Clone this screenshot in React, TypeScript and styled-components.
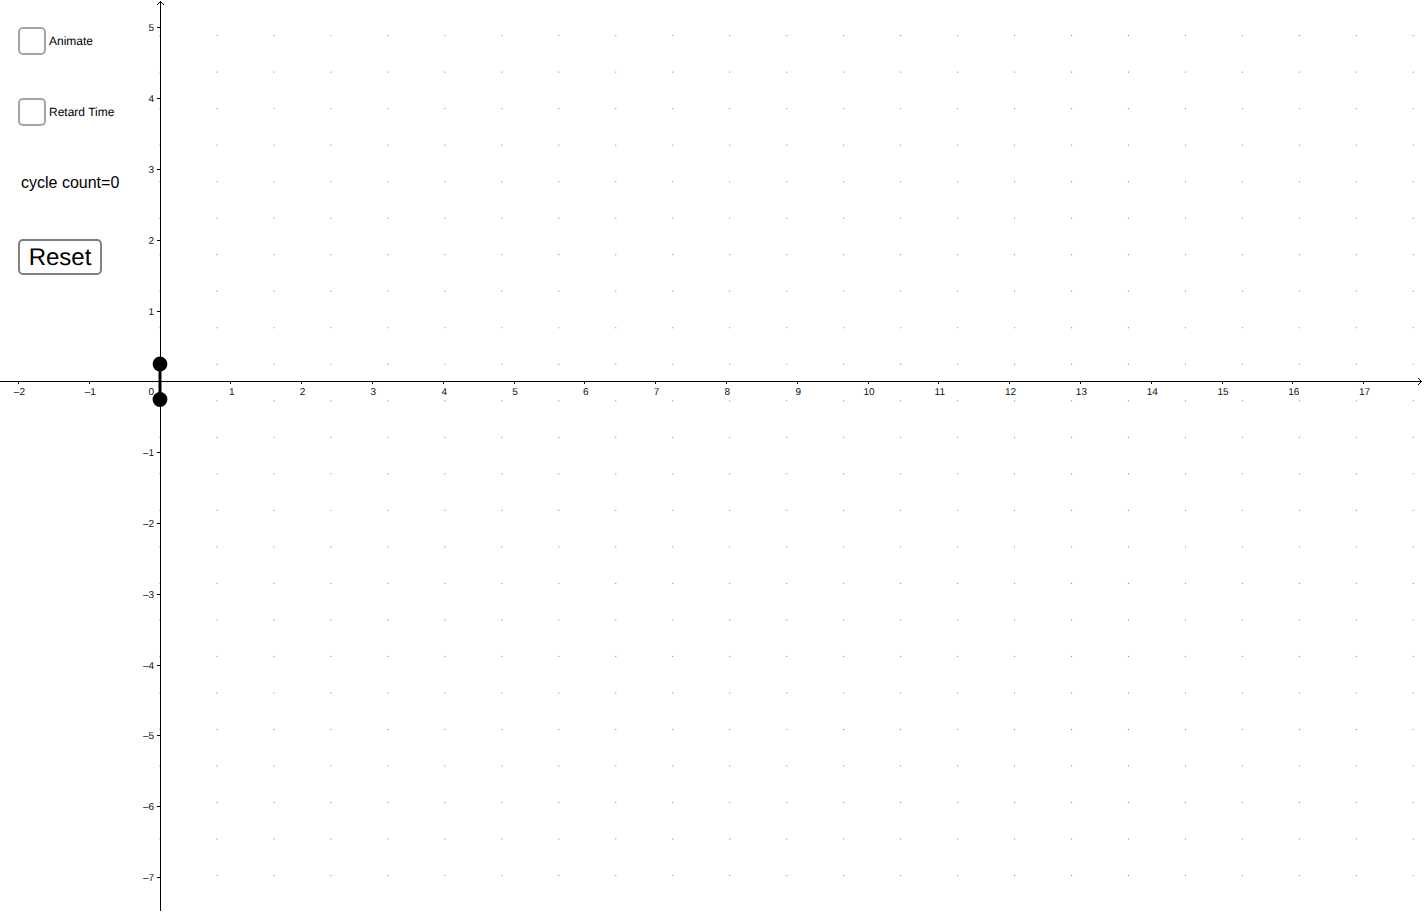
import React, { useEffect, useState } from "react";
import styled, { createGlobalStyle } from "styled-components";

const GlobalStyle = createGlobalStyle`
  body {
    margin: 0;
    background: #fff;
    color: #000;
    font-family: "Liberation Sans", Arial, sans-serif;
    text-rendering: geometricPrecision;
    overflow: hidden;
  }
`;

const Applet = styled.main`
  display: grid;
  min-height: 100vh;
`;

const Plot = styled.svg`
  grid-area: 1 / 1;
  display: block;
  width: 100%;
  height: 100vh;
  overflow: hidden;
`;

const TickLabel = styled.text`
  font-size: 10px;
  fill: #111;
`;

const Controls = styled.form`
  grid-area: 1 / 1;
  z-index: 1;
  display: flex;
  flex-direction: column;
  align-items: flex-start;
  align-self: start;
  justify-self: start;
  gap: 43px;
  padding: 27px 18px;
`;

const CheckRow = styled.label`
  display: flex;
  align-items: center;
  gap: 3px;
  height: 28px;
  font-size: 12px;
  line-height: 14px;
  white-space: nowrap;
`;

const CheckBox = styled.input`
  appearance: none;
  box-sizing: border-box;
  width: 28px;
  height: 28px;
  margin: 0;
  border: 2px solid #9fa9a0;
  border-radius: 5px;
  background: #fff;

  &:checked {
    background: #9fa9a0;
    box-shadow: inset 0 0 0 4px #fff;
  }
`;

const Readout = styled.output`
  height: 27px;
  padding-left: 3px;
  font-size: 16px;
  line-height: 28px;
  text-rendering: auto;
  white-space: nowrap;
`;

const ResetButton = styled.button`
  box-sizing: border-box;
  width: 84px;
  height: 36px;
  padding: 2px 0 0;
  border: 2px solid #808080;
  border-radius: 5px;
  background: #fff;
  color: #000;
  font-family: inherit;
  text-rendering: inherit;
  font-size: 24px;
  line-height: 28px;
`;

const ORIGIN = { x: 160, y: 381 };
const UNIT = 70.8;
const GRID = { x: 56.97, y: 36.52, top: 35.6, left: 159.8 };

function useWindowSize() {
  const read = () => ({ width: window.innerWidth, height: window.innerHeight });
  const [size, setSize] = useState(read);
  useEffect(() => {
    const update = () => setSize(read());
    window.addEventListener("resize", update);
    return () => window.removeEventListener("resize", update);
  }, []);
  return size;
}

const range = (from: number, to: number) =>
  Array.from({ length: Math.max(0, to - from + 1) }, (_, i) => from + i);

const format = (n: number) => (n < 0 ? `–${-n}` : `${n}`);

const tickX = (n: number) => Math.floor(ORIGIN.x + n * UNIT);
const tickY = (n: number) => Math.round(ORIGIN.y + 0.4 - n * UNIT);

function Graph() {
  const { width, height } = useWindowSize();
  const right = width - 2;
  const bottom = height - 2;
  const xs = range(-2, Math.floor((right - 20 - ORIGIN.x) / UNIT)).filter((n) => n !== 0);
  const ys = range(-Math.floor((bottom - 10 - ORIGIN.y) / UNIT), 5).filter((n) => n !== 0);
  const columns = range(0, Math.floor((right - GRID.left) / GRID.x));
  const rows = range(0, Math.floor((bottom - GRID.top) / GRID.y));

  return (
    <Plot role="img" aria-label="Coordinate plane with a vertical segment at the origin">
      <g fill="#748578">
        {columns.map((c) =>
          rows.map((r) => (
            <rect
              key={`${c}-${r}`}
              x={GRID.left + c * GRID.x - 0.3}
              y={GRID.top + r * GRID.y - 0.5}
              width="1"
              height="1"
            />
          ))
        )}
      </g>

      <g stroke="#000" strokeWidth="1" fill="none">
        <path d={`M0 ${ORIGIN.y + 0.5}H${right}`} />
        <path d={`M${right - 4} ${ORIGIN.y - 3}L${right - 0.5} ${ORIGIN.y + 0.5}L${right - 4} ${ORIGIN.y + 4}`} />
        <path d={`M${ORIGIN.x + 0.5} 1V${bottom}`} />
        <path d={`M${ORIGIN.x - 3} 5L${ORIGIN.x + 0.5} 1.5L${ORIGIN.x + 4} 5`} />
        {xs.map((n) => (
          <path key={`x${n}`} d={`M${tickX(n) + 0.5} ${ORIGIN.y}v3`} />
        ))}
        {ys.map((n) => (
          <path key={`y${n}`} d={`M${ORIGIN.x - 3} ${tickY(n) + 0.5}h3`} />
        ))}
      </g>

      {xs.map((n) => (
        <TickLabel key={n} x={ORIGIN.x + n * UNIT + 1} y={ORIGIN.y + 14} textAnchor="middle">
          {format(n)}
        </TickLabel>
      ))}
      <TickLabel x={ORIGIN.x - 6} y={ORIGIN.y + 14} textAnchor="end">
        0
      </TickLabel>
      {ys.map((n) => (
        <TickLabel key={n} x={ORIGIN.x - 6} y={tickY(n) + 4} textAnchor="end">
          {format(n)}
        </TickLabel>
      ))}

      <line x1={ORIGIN.x} x2={ORIGIN.x} y1="364" y2="399.5" stroke="#000" strokeWidth="3" />
      <circle cx={ORIGIN.x} cy="364" r="7.4" />
      <circle cx={ORIGIN.x} cy="399.5" r="7.4" />
    </Plot>
  );
}

export default function App() {
  const [cycles, setCycles] = useState(0);

  return (
    <>
      <GlobalStyle />
      <Applet>
        <Graph />
        <Controls onReset={() => setCycles(0)}>
          <CheckRow htmlFor="animate">
            <CheckBox id="animate" type="checkbox" />
            Animate
          </CheckRow>
          <CheckRow htmlFor="retard">
            <CheckBox id="retard" type="checkbox" />
            Retard Time
          </CheckRow>
          <Readout>cycle count={cycles}</Readout>
          <ResetButton type="reset">Reset</ResetButton>
        </Controls>
      </Applet>
    </>
  );
}
